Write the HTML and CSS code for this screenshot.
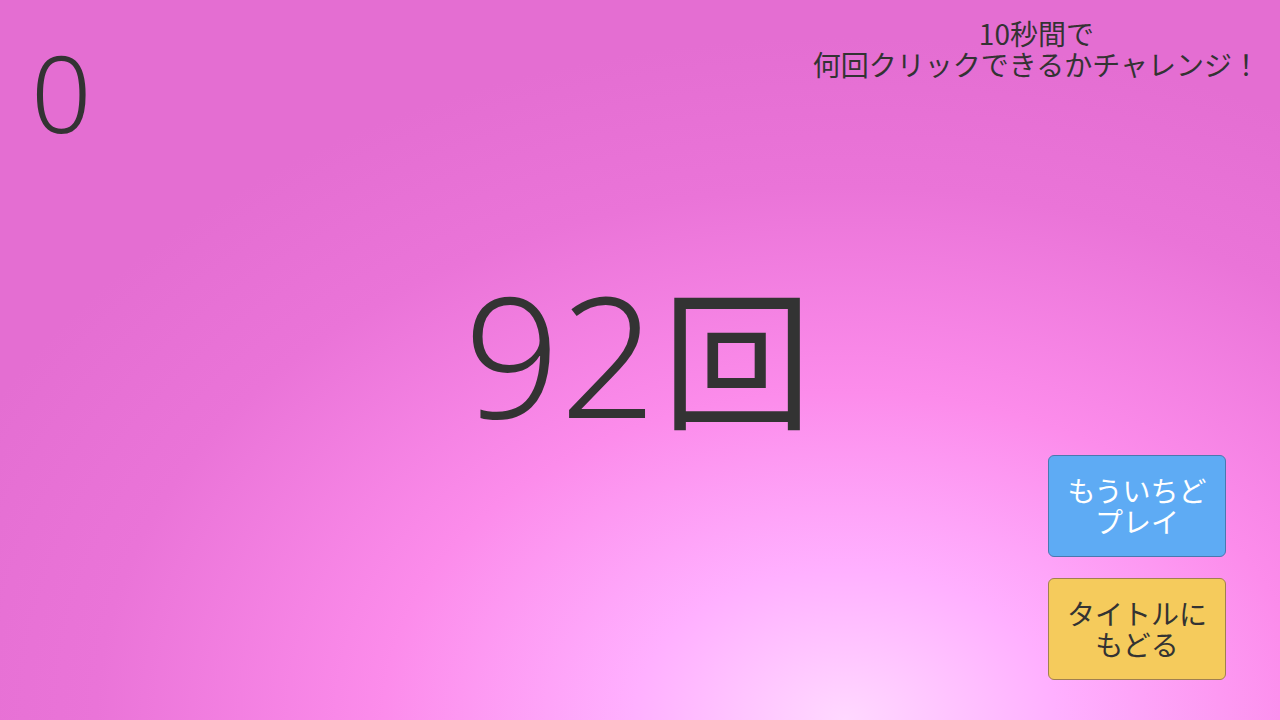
FILE: index.html
```html
<!DOCTYPE html>
<html lang="ja">
<head>
    <meta charset="UTF-8">
    <meta name="viewport" content="width=device-width, initial-scale=1.0">
    <title>10秒チャレンジ</title>
    <link rel="stylesheet" href="styles.css">
</head>
<body>
    <div class="screen">
        <div class="top-bar">
            <div class="timer">0</div>
            <div class="caption">10秒間で<br>何回クリックできるかチャレンジ！</div>
        </div>

        <div class="result">92<span class="unit">回</span></div>

        <div class="buttons">
            <button class="btn btn-retry">もういちど<br>プレイ</button>
            <button class="btn btn-title">タイトルに<br>もどる</button>
        </div>
    </div>
</body>
</html>
```

FILE: styles.css
```css
* {
    box-sizing: border-box;
}

html, body {
    margin: 0;
    padding: 0;
}

body {
    font-family: "Noto Sans CJK JP", "Noto Sans", sans-serif;
    color: #333;
    background: radial-gradient(ellipse 75% 95% at 66% 100%, #ffd8ff 0%, #ffb0ff 22%, #fc8ceb 48%, #ea74d8 78%, #e46ed2 100%);
    width: 1280px;
    height: 720px;
    overflow: hidden;
}

/* todos os blocos ficam na mesma célula da grade */
.screen {
    display: grid;
    width: 1280px;
    height: 720px;
}

.screen > * {
    grid-area: 1 / 1;
}

.top-bar {
    align-self: start;
    display: flex;
    justify-content: space-between;
    align-items: flex-start;
    padding: 18px 20px 0 31px;
}

.timer {
    font-family: "Noto Sans", sans-serif;
    font-size: 106px;
    font-weight: 300;
    line-height: 1;
    margin-top: 21px;
}

.caption {
    font-size: 28px;
    line-height: 31px;
    text-align: center;
}

.result {
    align-self: center;
    justify-self: center;
    font-family: "Noto Sans", "Noto Sans CJK JP", sans-serif;
    font-size: 168px;
    font-weight: 300;
    line-height: 1;
    margin-left: -4px;
    margin-top: -14px;
    display: flex;
    align-items: baseline;
}

.result .unit {
    font-family: "Noto Sans CJK JP", sans-serif;
    font-size: 150px;
    font-weight: 400;
    margin-left: 6px;
}

.buttons {
    align-self: end;
    justify-self: end;
    display: flex;
    flex-direction: column;
    gap: 21px;
    margin: 0 54px 40px 0;
}

.btn {
    width: 178px;
    height: 102px;
    border-radius: 6px;
    font-family: inherit;
    font-size: 28px;
    line-height: 31px;
    padding: 0;
    cursor: pointer;
}

.btn-retry {
    background-color: #5eabf4;
    border: 1px solid #4a78b0;
    color: #fff;
}

.btn-title {
    background-color: #f5cb5c;
    border: 1px solid #a08050;
    color: #333;
}
```
